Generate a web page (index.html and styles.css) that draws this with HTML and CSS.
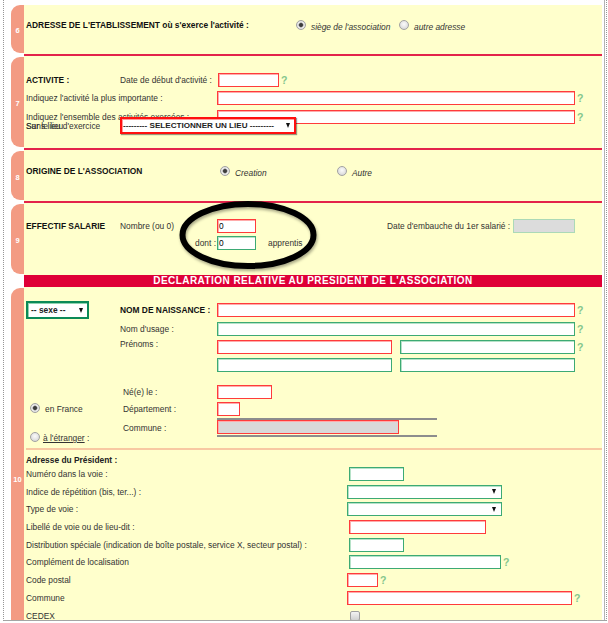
FILE: index.html
```html
<!DOCTYPE html>
<html lang="fr">
<head>
<meta charset="utf-8">
<title>Déclaration association</title>
<link rel="stylesheet" href="styles.css">
</head>
<body>
<div class="frame">
<div class="inner">

  <div class="sec">
    <div class="tab first"><span>6</span></div>
    <div class="content c6">
      <div class="row mt13">
        <span class="title w270">ADRESSE DE L'ETABLISSEMENT où s'exerce l'activité :</span>
        <span class="opt w103"><span class="radio on"></span><span class="olabel">siège de l'association</span></span>
        <span class="opt"><span class="radio"></span><span class="olabel">autre adresse</span></span>
      </div>
    </div>
  </div>

  <div class="sec">
    <div class="tab"><span>7</span></div>
    <div class="content c7">
      <div class="row mt17">
        <span class="title w94">ACTIVITE :</span>
        <span class="lbl w98">Date de début d'activité :</span>
        <input class="in r w61" type="text">
        <span class="q">?</span>
      </div>
      <div class="row mt4">
        <span class="lbl w191">Indiquez l'activité la plus importante :</span>
        <input class="in r w358" type="text">
        <span class="q">?</span>
      </div>
      <div class="row mt5">
        <span class="lbl w191">Indiquez l'ensemble des activités exercées :</span>
        <input class="in r w358" type="text">
        <span class="q">?</span>
      </div>
      <div class="row row-lieu">
        <span class="lieu w94"><span>Sans lieu d'exercice</span><span class="ghost">Sur le lieu</span></span>
        <div class="sel sel-lieu"><span>--------- SELECTIONNER UN LIEU ---------</span><span class="arr"></span></div>
      </div>
    </div>
  </div>

  <div class="sec">
    <div class="tab"><span>8</span></div>
    <div class="content c8">
      <div class="row mt14">
        <span class="title w194">ORIGINE DE L'ASSOCIATION</span>
        <span class="opt w117"><span class="radio on"></span><span class="olabel">Creation</span></span>
        <span class="opt"><span class="radio"></span><span class="olabel">Autre</span></span>
      </div>
    </div>
  </div>

  <div class="sec">
    <div class="tab t9"><span>9</span></div>
    <div class="content c9">
      <div class="row mt16">
        <span class="title w94">EFFECTIF SALARIE</span>
        <span class="lbl w97">Nombre (ou 0)</span>
        <input class="in r w39" type="text" value="0">
        <span class="w131"></span>
        <span class="lbl w126">Date d'embauche du 1er salarié :</span>
        <input class="in gray w62" type="text">
      </div>
      <div class="row mt3">
        <span class="w94"></span>
        <span class="lbl w97 right">dont :</span>
        <input class="in g w39" type="text" value="0">
        <span class="lbl pl12">apprentis</span>
      </div>
      <svg class="ring" width="160" height="82" viewBox="0 0 160 82" aria-hidden="true">
        <ellipse cx="78" cy="40" rx="65.5" ry="31" fill="none" stroke="#000" stroke-width="6"/>
      </svg>
    </div>
  </div>

  <div class="banner-row">
    <div class="banner-gap"></div>
    <div class="banner">DECLARATION RELATIVE AU PRESIDENT DE L'ASSOCIATION</div>
  </div>

  <div class="sec">
    <div class="tab"><span>10</span></div>
    <div class="content c10">
      <div class="pres">
        <div class="pres-left">
          <div class="sel sel-sexe"><span>-- sexe --</span><span class="arr"></span></div>
          <div class="opt opt-fr"><span class="radio on"></span><span class="olabel-n">en France</span></div>
          <div class="opt opt-et"><span class="radio"></span><span class="olabel-n"><u>à l'étranger</u> :</span></div>
        </div>
        <div class="pres-right">
          <div class="row mt16">
            <span class="title w97">NOM DE NAISSANCE :</span>
            <input class="in r w358" type="text"><span class="q">?</span>
          </div>
          <div class="row mt5">
            <span class="lbl w97">Nom d'usage :</span>
            <input class="in g w358" type="text"><span class="q">?</span>
          </div>
          <div class="prenoms">
            <span class="lbl w97 toplbl">Prénoms :</span>
            <div class="pcol">
              <div class="prow">
                <input class="in r w175" type="text">
                <input class="in g w175 gap8" type="text"><span class="q">?</span>
              </div>
              <div class="prow">
                <input class="in g w175" type="text">
                <input class="in g w175 gap8" type="text">
              </div>
            </div>
          </div>
          <div class="row mt13">
            <span class="lbl w97 pl3">Né(e) le :</span>
            <input class="in r w55" type="text">
          </div>
          <div class="row mt3h">
            <span class="lbl w97 pl3">Département :</span>
            <input class="in r w23" type="text">
          </div>
          <div class="row rowg">
            <span class="lbl w97 pl3">Commune :</span>
            <div class="cell"><input class="in r gray2 w182" type="text"></div>
          </div>
        </div>
      </div>

      <div class="sep"></div>
      <div class="addr-title">Adresse du Président :</div>

      <div class="addr">
        <div class="row"><span class="lbl w321">Numéro dans la voie :</span><input class="in g w55 ml2" type="text"></div>
        <div class="row"><span class="lbl w321">Indice de répétition (bis, ter...) :</span><div class="sel sel-voie"><span class="arr"></span></div></div>
        <div class="row"><span class="lbl w321">Type de voie :</span><div class="sel sel-voie"><span class="arr"></span></div></div>
        <div class="row"><span class="lbl w321">Libellé de voie ou de lieu-dit :</span><input class="in r w137 ml2" type="text"></div>
        <div class="row"><span class="lbl w321">Distribution spéciale (indication de boîte postale, service X, secteur postal) :</span><input class="in g w55 ml2" type="text"></div>
        <div class="row"><span class="lbl w321">Complément de localisation</span><input class="in g w152 ml2" type="text"><span class="q">?</span></div>
        <div class="row"><span class="lbl w321">Code postal</span><input class="in r w31" type="text"><span class="q">?</span></div>
        <div class="row"><span class="lbl w321">Commune</span><input class="in r w225" type="text"><span class="q">?</span></div>
        <div class="row"><span class="lbl w321">CEDEX</span><span class="cb"></span></div>
      </div>
    </div>
  </div>

</div>
</div>
</body>
</html>
```

FILE: styles.css
```css
* { box-sizing: border-box; }

html, body {
  margin: 0;
  padding: 0;
  background: #fff;
}

body {
  font-family: "Liberation Sans", Arial, Helvetica, sans-serif;
  font-size: 8.4px;
  color: #333;
}

.frame {
  margin-left: 3px;
  width: 604px;
  height: 621px;
  border-left: 1px dotted #969696;
  border-right: 1px dotted #969696;
  border-bottom: 1px solid #a5a5a5;
  overflow: hidden;
}

.inner {
  width: 601px;
  height: 620px;
  padding: 5px 2px 0 7px;
  border-right: 1px solid #b3b3b3;
  overflow: hidden;
}

/* sections */
.sec { display: flex; }

.tab {
  flex: 0 0 13px;
  width: 13px;
  background: #f39b83;
  border-radius: 9px 0 0 9px;
  margin: 1px 0 3px;
  padding-top: 3px;
  display: flex;
  align-items: center;
  justify-content: center;
  color: #fff;
  font-weight: bold;
  font-size: 7.5px;
}
.tab.first { margin-top: 0; }
.tab.t9 { margin-bottom: 1px; }

.content {
  flex: 1;
  min-width: 0;
  background: #ffffcc;
  border-bottom: 2px solid #e3234b;
  padding-left: 2px;
}
.c6 { height: 51px; }
.c7 { height: 94px; }
.c8 { height: 53px; }
.c9 { height: 72px; border-bottom: 0; position: relative; }
.c10 { min-height: 384px; border-bottom: 0; }

/* rows */
.row {
  display: flex;
  align-items: center;
  height: 14px;
  white-space: nowrap;
}
.row > *, .prow > * { flex-shrink: 0; }

.mt2 { margin-top: 2px; }
.mt3 { margin-top: 3px; }
.mt3h { margin-top: 3.5px; }
.mt4 { margin-top: 4px; }
.mt5 { margin-top: 5px; }
.mt13 { margin-top: 13px; }
.mt14 { margin-top: 14px; }
.mt16 { margin-top: 16px; }
.mt17 { margin-top: 17px; }

.title { font-weight: bold; color: #111; }
.lbl { color: #333; }
.right { text-align: right; padding-right: 1px; }
.pl3 { padding-left: 3px; }
.pl12 { padding-left: 12px; }
.ml2 { margin-left: 2px; }

.w23 { width: 23px; }
.w31 { width: 31px; }
.w39 { width: 39px; }
.w55 { width: 55px; }
.w61 { width: 61px; }
.w62 { width: 62px; }
.w94 { width: 94px; }
.w97 { width: 97px; }
.w98 { width: 98px; }
.w103 { width: 103px; }
.w117 { width: 117px; }
.w126 { width: 126px; }
.w131 { width: 131px; }
.w137 { width: 137px; }
.w152 { width: 152px; }
.w175 { width: 175px; }
.w182 { width: 182px; }
.w191 { width: 191px; }
.w194 { width: 194px; }
.w225 { width: 225px; }
.w270 { width: 270px; }
.w321 { width: 321px; }
.w358 { width: 358px; }

/* inputs */
.in {
  display: block;
  height: 14px;
  margin: 0;
  padding: 0 1px;
  border: 1px solid;
  font: inherit;
  font-size: 8.4px;
  color: #000;
  background: #fff;
  outline: 0;
}
.in.ml2 { margin-left: 2px; }
.r { border-color: #ff3b3b; box-shadow: inset 1px 1px 0 #ffabab; }
.g { border-color: #3daa74; box-shadow: inset 1px 1px 0 #b6e2c8; }
.gray { background: #dcdcdc; border-color: #acd9b7; }
.gray2 { background: #d9d9d9; }
.gap8 { margin-left: 8px; }

.q {
  color: #84c68c;
  font-weight: bold;
  font-size: 10.5px;
  line-height: 10px;
  margin-left: 2px;
}

/* radios / checkbox */
.opt {
  display: flex;
  align-items: center;
  gap: 5px;
}
.radio {
  width: 10px;
  height: 10px;
  flex-shrink: 0;
  border-radius: 50%;
  border: 1px solid #a2a2a2;
  background: radial-gradient(circle at 50% 40%, #fbfbfb 0, #e6e6e6 50%, #cdcdcd 100%);
}
.radio.on {
  background: radial-gradient(circle, #3c3c3c 0, #3c3c3c 1.5px, #9c9c9c 2.2px, #ececec 2.9px, #d0d0d0 100%);
}
.olabel { font-style: italic; color: #333; padding-top: 3px; }
.olabel-n { color: #333; padding-top: 2px; white-space: nowrap; }
.olabel-n u { text-decoration: underline; }

.cb {
  width: 10px;
  height: 10px;
  margin-left: 3px;
  border: 1px solid #a0a0a0;
  border-radius: 2px;
  background: linear-gradient(#f3f3f3, #d0d0d0);
}

/* selects */
.sel {
  display: flex;
  align-items: center;
  justify-content: space-between;
  background: #fff;
  flex-shrink: 0;
  white-space: nowrap;
}
.arr {
  width: 0;
  height: 0;
  border-left: 2.5px solid transparent;
  border-right: 2.5px solid transparent;
  border-top: 5px solid #111;
}
.sel-lieu {
  position: relative;
  width: 176px;
  height: 17px;
  border: 2px solid #ff1010;
  box-shadow: 1px 1px 1px rgba(0, 0, 0, .4), inset 1px 1px 0 #ff9a9a;
  padding: 0 4px 0 1px;
  font-weight: bold;
  font-size: 8.1px;
  color: #222;
}
.sel-sexe {
  width: 63px;
  height: 18px;
  margin-top: 14px;
  border: 2px solid #0b8a57;
  box-shadow: inset 1px 1px 0 #8fd3b0;
  padding: 0 4px 0 3px;
  font-weight: bold;
  color: #222;
}
.sel-voie {
  width: 155px;
  height: 14px;
  border: 1px solid #3daa74;
  box-shadow: inset 1px 1px 0 #b6e2c8;
  padding-right: 5px;
  justify-content: flex-end;
}

/* overlapping "lieu" label */
.row-lieu { height: 17px; margin-top: -7px; }
.lieu { position: relative; color: #333; }
.ghost { position: absolute; left: 0; top: 0; }

/* hand-drawn ring over section 9 */
.ring {
  position: absolute;
  left: 146px;
  top: -8px;
  filter: drop-shadow(1px 2px 1.5px rgba(0, 0, 0, .35));
  pointer-events: none;
}

/* banner */
.banner-row { display: flex; height: 12px; }
.banner-gap { width: 13px; flex-shrink: 0; }
.banner {
  flex: 1;
  background: #df0037;
  color: #fff;
  font-weight: bold;
  font-size: 10px;
  letter-spacing: .45px;
  line-height: 12px;
  text-align: center;
  white-space: nowrap;
}

/* president block */
.pres { display: flex; align-items: flex-start; }
.pres-left { width: 94px; flex-shrink: 0; }
.pres-right { flex: 1; min-width: 0; }
.opt-fr { margin-top: 84px; height: 10px; padding-left: 4px; gap: 5px; }
.opt-et { margin-top: 19px; height: 10px; padding-left: 4px; gap: 3px; }

.prenoms { display: flex; align-items: flex-start; margin-top: 3.5px; }
.toplbl { line-height: 8px; flex-shrink: 0; }
.pcol { display: flex; flex-direction: column; gap: 4px; }
.prow { display: flex; align-items: center; height: 14px; }

.rowg { height: 19px; margin-top: 2px; }
.cell {
  width: 220px;
  height: 19px;
  border-top: 2px solid #8d8d8d;
  border-bottom: 2px solid #8d8d8d;
}

.sep { height: 2px; background: #f8c8a2; margin-top: 6px; }
.addr-title {
  margin-top: 5px;
  line-height: 10px;
  font-weight: bold;
  color: #222;
}
.addr {
  display: flex;
  flex-direction: column;
  gap: 3.7px;
  margin-top: 2px;
}
```
